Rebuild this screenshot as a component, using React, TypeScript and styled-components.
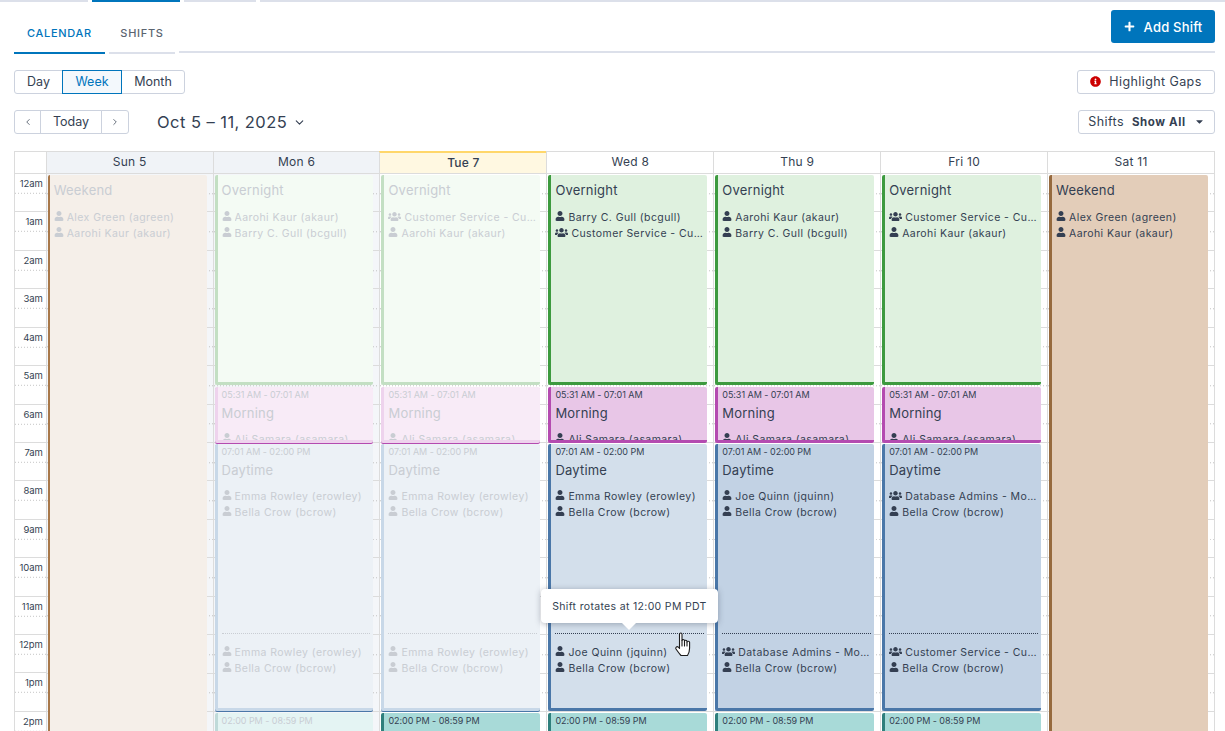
import React from 'react';
import styled, { createGlobalStyle } from 'styled-components';
import { FaUser, FaUsers, FaPlus, FaInfoCircle, FaCaretDown } from 'react-icons/fa';
import { ChevronDown, ChevronLeft, ChevronRight } from 'lucide-react';

const HOUR = 38.43;
const INK = '#343f52';
const FADED_INK = '#c9cdd3';

const Global = createGlobalStyle`
  html, body { margin: 0; padding: 0; background: #fff; height: 731px; overflow: hidden; }
  body { font-family: Inter, "Open Sans", "Liberation Sans", sans-serif; color: ${INK}; }
  * { box-sizing: border-box; }
`;

const palette = {
  overnight: { bg: '#dff1df', border: '#3d9a3f', fadedBg: '#f4fbf4', fadedBorder: '#c3dfc3', edge: 'none' },
  morning: { bg: '#e8c6e7', border: '#b44bb0', fadedBg: '#f8ebf7', fadedBorder: '#eed3ed', edge: '#b44bb0' },
  daytime: { bg: '#c2d2e4', border: '#4a77a8', fadedBg: '#ecf1f6', fadedBorder: '#c8d8e8', edge: '#4a77a8' },
  swing: { bg: '#a8dad8', border: '#2f7f7c', fadedBg: '#e4f4f3', fadedBorder: '#bfdad9', edge: 'none' },
  weekend: { bg: '#e3cdb9', border: '#966a3e', fadedBg: '#f5efe9', fadedBorder: '#a8784a', edge: 'none' },
};
type Kind = keyof typeof palette;

// one hour of grid: a dotted half-hour line, repeated down the day columns
const dotted = `url("data:image/svg+xml,%3Csvg xmlns='http://www.w3.org/2000/svg' width='3' height='${HOUR}'%3E%3Crect x='0' y='19' width='1' height='1' fill='%23c4c4c4'/%3E%3C/svg%3E")`;

const Page = styled.div`
  width: 1225px;
  height: 731px;
  overflow: hidden;
  position: relative;
`;

const TopStrip = styled.div`
  display: flex;
  gap: 4px;
  height: 2px;
`;
const StripTab = styled.div<{ $w?: number; $on?: boolean }>`
  flex: ${(p) => (p.$w ? `0 0 ${p.$w}px` : 1)};
  background: ${(p) => (p.$on ? '#0075bc' : '#dce0ea')};
`;

const TabRow = styled.div`
  display: flex;
  align-items: flex-end;
  gap: 4px;
  height: 52px;
  margin: 0 10px 0 14px;
  position: relative;
`;
const Tab = styled.div<{ $on?: boolean; $w: number }>`
  width: ${(p) => p.$w}px;
  height: 40px;
  padding-top: 12px;
  text-align: center;
  font-size: 11px;
  font-weight: 500;
  letter-spacing: 0.7px;
  line-height: 14px;
  color: ${(p) => (p.$on ? '#0075bc' : '#5b6470')};
  border-bottom: 2px solid ${(p) => (p.$on ? '#0075bc' : '#dce0ea')};
`;
const TabFill = styled.div`
  flex: 1;
  align-self: flex-end;
  height: 2px;
  margin-bottom: 1px;
  background: #dce0ea;
`;
const AddShift = styled.button`
  position: absolute;
  right: 0;
  top: 8px;
  width: 104px;
  height: 33px;
  display: flex;
  align-items: center;
  justify-content: center;
  gap: 9px;
  border: 0;
  border-radius: 3px;
  background: #0075bc;
  color: #fff;
  font: 500 13px Inter, sans-serif;
  letter-spacing: 0.2px;
  svg { width: 11px; height: 11px; }
`;

const ToolRow = styled.div<{ $top: number }>`
  display: flex;
  justify-content: space-between;
  align-items: center;
  height: 24px;
  margin: ${(p) => p.$top}px 10px 0 14px;
`;
const Group = styled.div`
  display: flex;
  align-items: center;
`;
const Seg = styled.div<{ $w: number; $on?: boolean; $pos?: 'first' | 'last' }>`
  width: ${(p) => p.$w}px;
  height: 24px;
  display: flex;
  align-items: center;
  justify-content: center;
  padding-bottom: 1px;
  font-size: 12.5px;
  color: ${(p) => (p.$on ? '#0075bc' : INK)};
  background: ${(p) => (p.$on ? '#f3f8fc' : '#fff')};
  border: 1px solid ${(p) => (p.$on ? '#0075bc' : '#ccd2de')};
  margin-left: ${(p) => (p.$pos === 'first' ? 0 : -1)}px;
  position: relative;
  z-index: ${(p) => (p.$on ? 1 : 0)};
  border-radius: ${(p) => (p.$pos === 'first' ? '3px 0 0 3px' : p.$pos === 'last' ? '0 3px 3px 0' : '0')};
  svg { width: 10px; height: 10px; color: #4b5564; }
`;
const DateTitle = styled.div`
  display: flex;
  align-items: center;
  gap: 6px;
  margin-left: 28px;
  font-size: 16.5px;
  letter-spacing: 0.45px;
  svg { width: 13px; height: 13px; }
`;
const OutlineBtn = styled.div<{ $w: number }>`
  width: ${(p) => p.$w}px;
  height: 24px;
  display: flex;
  align-items: center;
  justify-content: center;
  gap: 8px;
  padding-bottom: 1px;
  font-size: 12.5px;
  letter-spacing: 0.4px;
  border: 1px solid #ccd2de;
  border-radius: 3px;
  b { font-weight: 700; font-size: 11.5px; letter-spacing: 0.6px; }
  > svg { width: 11px; height: 11px; }
`;

const Calendar = styled.div`
  margin: 17px 10px 0 14px;
  border: 1px solid #dcdcdc;
  border-bottom: 0;
  height: 600px;
`;
const HeadRow = styled.div`
  display: grid;
  grid-template-columns: 30.7px repeat(7, minmax(0, 1fr));
  height: 22px;
  border-bottom: 1px solid #dcdcdc;
`;
const HeadCell = styled.div<{ $tone?: 'past' | 'today' }>`
  display: flex;
  align-items: center;
  justify-content: center;
  padding-bottom: 2px;
  font-size: 12px;
  letter-spacing: 0.25px;
  border-left: 1px solid #dcdcdc;
  margin-top: ${(p) => (p.$tone === 'today' ? -1 : 0)}px;
  background: ${(p) => (p.$tone === 'past' ? '#f0f3f7' : p.$tone === 'today' ? '#fff8e1' : '#fff')};
  border-top: ${(p) => (p.$tone === 'today' ? '2px solid #ffd76a' : '0')};
  font-weight: ${(p) => (p.$tone === 'today' ? 500 : 400)};
  &:first-child { border-left: 0; background: #fff; }
`;
const Body = styled.div`
  display: grid;
  grid-template-columns: 30.7px repeat(7, minmax(0, 1fr));
  position: relative;
`;
const Times = styled.div`
  display: flex;
  flex-direction: column;
`;
const TimeCell = styled.div`
  height: ${HOUR}px;
  padding: 4px 3px 0 0;
  text-align: right;
  font-size: 9.5px;
  line-height: 12px;
  letter-spacing: -0.1px;
  border-bottom: 1px solid #dcdcdc;
  background: ${dotted} 0 0 / 3px ${HOUR}px repeat-x;
`;
const DayCol = styled.div<{ $past?: boolean }>`
  border-left: 1px solid #dcdcdc;
  padding: 1px 6px 0 1px;
  display: flex;
  flex-direction: column;
  gap: 1px;
  height: 600px;
  background-color: ${(p) => (p.$past ? '#f4f6f9' : '#fff')};
  background-image:
    repeating-linear-gradient(to bottom, transparent 0 ${HOUR - 1}px, #dcdcdc ${HOUR - 1}px ${HOUR}px),
    ${dotted};
  background-size: auto, 3px ${HOUR}px;
`;
const Shift = styled.div<{ $kind: Kind; $h: number; $faded?: boolean; $hover?: boolean; $open?: boolean; $after?: number }>`
  flex: 0 0 ${(p) => p.$h}px;
  height: ${(p) => p.$h}px;
  margin-bottom: ${(p) => p.$after ?? 0}px;
  overflow: hidden;
  padding: 0 3px 0 4px;
  border-radius: 2px;
  color: ${(p) => (p.$faded ? FADED_INK : INK)};
  background: ${(p) => (p.$hover ? '#d3dfeb' : p.$faded ? palette[p.$kind].fadedBg : palette[p.$kind].bg)};
  border-left: ${(p) => (p.$kind === 'weekend' && p.$faded ? 2 : 3)}px solid ${(p) => (p.$faded ? palette[p.$kind].fadedBorder : palette[p.$kind].border)};
  border-bottom: ${(p) => (p.$open ? 0 : 3)}px solid ${(p) => (p.$faded ? palette[p.$kind].fadedBorder : palette[p.$kind].border)};
  box-shadow: ${(p) => (p.$faded && palette[p.$kind].edge !== 'none' ? `0 1px 0 ${palette[p.$kind].edge}` : 'none')};
`;
const TimeRange = styled.div`
  font-size: 9px;
  line-height: 12px;
  padding-top: 2px;
  white-space: nowrap;
  letter-spacing: -0.05px;
`;
const Title = styled.div<{ $first?: boolean }>`
  font-size: 13px;
  line-height: 16px;
  margin: ${(p) => (p.$first ? '7px 0 11px' : '4px 0 10px')};
  letter-spacing: 0.2px;
`;
const Person = styled.div`
  display: flex;
  align-items: center;
  height: 16px;
  font-size: 10.5px;
  letter-spacing: 0.42px;
  white-space: nowrap;
  overflow: hidden;
  span { overflow: hidden; text-overflow: ellipsis; }
  svg { flex: none; width: 10px; height: 10px; margin-right: 3px; margin-top: -2px; }
  svg.group { width: 13px; height: 11px; margin-right: 3px; }
`;
const Rotation = styled.div`
  border-top: 1px dotted currentColor;
  margin-top: 113px;
  padding-top: 10px;
`;

const Tooltip = styled.div`
  position: absolute;
  left: 526px;
  top: 415px;
  width: 177px;
  height: 34px;
  background: #fff;
  border-radius: 4px;
  box-shadow: 0 1px 6px rgba(40, 50, 70, 0.35);
  display: flex;
  align-items: center;
  justify-content: center;
  font-size: 10.5px;
  letter-spacing: 0.33px;
  white-space: nowrap;
  &::after {
    content: '';
    position: absolute;
    left: 81px;
    bottom: -7px;
    border-left: 7px solid transparent;
    border-right: 7px solid transparent;
    border-top: 7px solid #fff;
  }
`;
const HandCursor = styled.svg`
  position: absolute;
  left: 660px;
  top: 458px;
  width: 18px;
  height: 25px;
  fill: #fff;
  stroke: #1c1c1c;
  stroke-width: 1.1;
  stroke-linejoin: round;
  stroke-linecap: round;
`;

const P = ({ name, group }: { name: string; group?: boolean }) => (
  <Person>
    {group ? <FaUsers className="group" /> : <FaUser />}
    <span>{name}</span>
  </Person>
);

const CS = 'Customer Service - Customer Support';
const DBA = 'Database Admins - Mobile';

const OvernightShift = ({ a, b, ag, bg, faded }: { a: string; b: string; ag?: boolean; bg?: boolean; faded?: boolean }) => (
  <Shift $kind="overnight" $h={210} $after={1} $faded={faded}>
    <Title $first>Overnight</Title>
    <P name={a} group={ag} />
    <P name={b} group={bg} />
  </Shift>
);

const MorningShift = ({ faded }: { faded?: boolean }) => (
  <Shift $kind="morning" $h={56} $faded={faded}>
    <TimeRange>05:31 AM - 07:01 AM</TimeRange>
    <Title>Morning</Title>
    <P name="Ali Samara (asamara)" />
  </Shift>
);

const DaytimeShift = ({
  a, ag, c, cg, faded, hover,
}: { a: string; ag?: boolean; c: string; cg?: boolean; faded?: boolean; hover?: boolean }) => (
  <Shift $kind="daytime" $h={267} $after={1} $faded={faded} $hover={hover}>
    <TimeRange>07:01 AM - 02:00 PM</TimeRange>
    <Title>Daytime</Title>
    <P name={a} group={ag} />
    <P name="Bella Crow (bcrow)" />
    <Rotation>
      <P name={c} group={cg} />
      <P name="Bella Crow (bcrow)" />
    </Rotation>
  </Shift>
);

const SwingShift = ({ faded }: { faded?: boolean }) => (
  <Shift $kind="swing" $h={40} $faded={faded} $open>
    <TimeRange>02:00 PM - 08:59 PM</TimeRange>
  </Shift>
);

const WeekendShift = ({ faded }: { faded?: boolean }) => (
  <Shift $kind="weekend" $h={600} $faded={faded} $open>
    <Title $first>Weekend</Title>
    <P name="Alex Green (agreen)" />
    <P name="Aarohi Kaur (akaur)" />
  </Shift>
);

const hours = ['12am', '1am', '2am', '3am', '4am', '5am', '6am', '7am', '8am', '9am', '10am', '11am', '12pm', '1pm', '2pm'];

export default function App() {
  return (
    <Page>
      <Global />
      <TopStrip>
        <StripTab $w={88} />
        <StripTab $w={88} $on />
        <StripTab $w={72} />
        <StripTab />
      </TopStrip>
      <TabRow>
        <Tab $w={91} $on>CALENDAR</Tab>
        <Tab $w={66}>SHIFTS</Tab>
        <TabFill />
        <AddShift><FaPlus />Add Shift</AddShift>
      </TabRow>
      <ToolRow $top={16}>
        <Group>
          <Seg $w={49} $pos="first">Day</Seg>
          <Seg $w={60} $on>Week</Seg>
          <Seg $w={64} $pos="last">Month</Seg>
        </Group>
        <OutlineBtn $w={138}><FaInfoCircle color="#cc0000" />Highlight Gaps</OutlineBtn>
      </ToolRow>
      <ToolRow $top={16}>
        <Group>
          <Seg $w={27} $pos="first"><ChevronLeft /></Seg>
          <Seg $w={62}>Today</Seg>
          <Seg $w={28} $pos="last"><ChevronRight /></Seg>
          <DateTitle>Oct 5 – 11, 2025 <ChevronDown /></DateTitle>
        </Group>
        <OutlineBtn $w={137}>Shifts <b>Show All</b><FaCaretDown /></OutlineBtn>
      </ToolRow>
      <Calendar>
        <HeadRow>
          <HeadCell />
          <HeadCell $tone="past">Sun 5</HeadCell>
          <HeadCell $tone="past">Mon 6</HeadCell>
          <HeadCell $tone="today">Tue 7</HeadCell>
          <HeadCell>Wed 8</HeadCell>
          <HeadCell>Thu 9</HeadCell>
          <HeadCell>Fri 10</HeadCell>
          <HeadCell>Sat 11</HeadCell>
        </HeadRow>
        <Body>
          <Times>
            {hours.map((h) => <TimeCell key={h}>{h}</TimeCell>)}
          </Times>
          <DayCol $past><WeekendShift faded /></DayCol>
          <DayCol $past>
            <OvernightShift faded a="Aarohi Kaur (akaur)" b="Barry C. Gull (bcgull)" />
            <MorningShift faded />
            <DaytimeShift faded a="Emma Rowley (erowley)" c="Emma Rowley (erowley)" />
            <SwingShift faded />
          </DayCol>
          <DayCol>
            <OvernightShift faded a={CS} ag b="Aarohi Kaur (akaur)" />
            <MorningShift faded />
            <DaytimeShift faded a="Emma Rowley (erowley)" c="Emma Rowley (erowley)" />
            <SwingShift />
          </DayCol>
          <DayCol>
            <OvernightShift a="Barry C. Gull (bcgull)" b={CS} bg />
            <MorningShift />
            <DaytimeShift hover a="Emma Rowley (erowley)" c="Joe Quinn (jquinn)" />
            <SwingShift />
          </DayCol>
          <DayCol>
            <OvernightShift a="Aarohi Kaur (akaur)" b="Barry C. Gull (bcgull)" />
            <MorningShift />
            <DaytimeShift a="Joe Quinn (jquinn)" c={DBA} cg />
            <SwingShift />
          </DayCol>
          <DayCol>
            <OvernightShift a={CS} ag b="Aarohi Kaur (akaur)" />
            <MorningShift />
            <DaytimeShift a={DBA} ag c={CS} cg />
            <SwingShift />
          </DayCol>
          <DayCol><WeekendShift /></DayCol>
          <Tooltip>Shift rotates at 12:00 PM PDT</Tooltip>
          <HandCursor viewBox="0 0 18 25">
            <path d="M4.5 2.2C4.5.6 7 .6 7 2.2V8.5C7 7.2 9.5 7.2 9.5 8.5V9C9.5 8 12 8 12 9.2V10C12 8.9 14.6 8.9 14.6 10.2V16C14.6 20 13.5 22 12.5 23.5H6C4.5 22 2.8 19.5 1 17C.2 15.6 1.8 14 3.2 15L4.5 16.5Z" />
            <path d="M7 8.5V14M9.5 9V14M12 10V14" fill="none" />
          </HandCursor>
        </Body>
      </Calendar>
    </Page>
  );
}
